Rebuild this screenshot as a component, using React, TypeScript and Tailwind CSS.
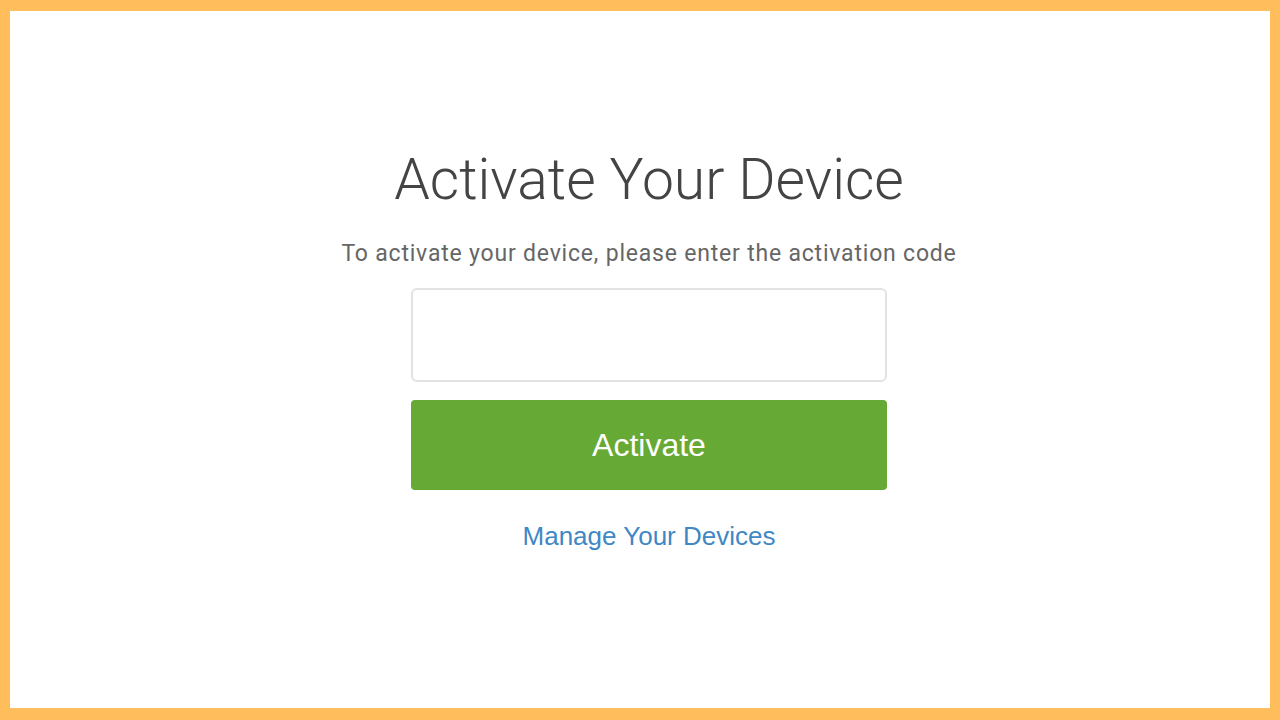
export default function App() {
  return (
    <div className="w-[1280px] h-[720px] bg-[#ffbd5c] pt-[11px] pl-[10px] pr-[10px] pb-[12px]">
      <div className="w-full h-full bg-white flex flex-col items-center pl-[18px]">
        <h1 className="mt-[137px] text-[57px] leading-[64px] font-light text-[#444] font-['Roboto',sans-serif]">
          Activate Your Device
        </h1>
        <p className="mt-[28px] text-[23px] leading-[28px] tracking-[0.8px] text-[#666] font-['Roboto',sans-serif]">
          To activate your device, please enter the activation code
        </p>
        <input
          className="mt-[20px] w-[476px] h-[94px] border-2 border-[#e2e2e2] rounded-[6px] outline-none"
          type="text"
        />
        <button className="mt-[18px] w-[476px] h-[90px] bg-[#66a935] rounded-[4px] text-white text-[32px] font-['Liberation_Sans',sans-serif]">
          Activate
        </button>
        <a className="mt-[31px] text-[26px] leading-[30px] text-[#3f88c5] font-['Liberation_Sans',sans-serif]">
          Manage Your Devices
        </a>
      </div>
    </div>
  );
}
